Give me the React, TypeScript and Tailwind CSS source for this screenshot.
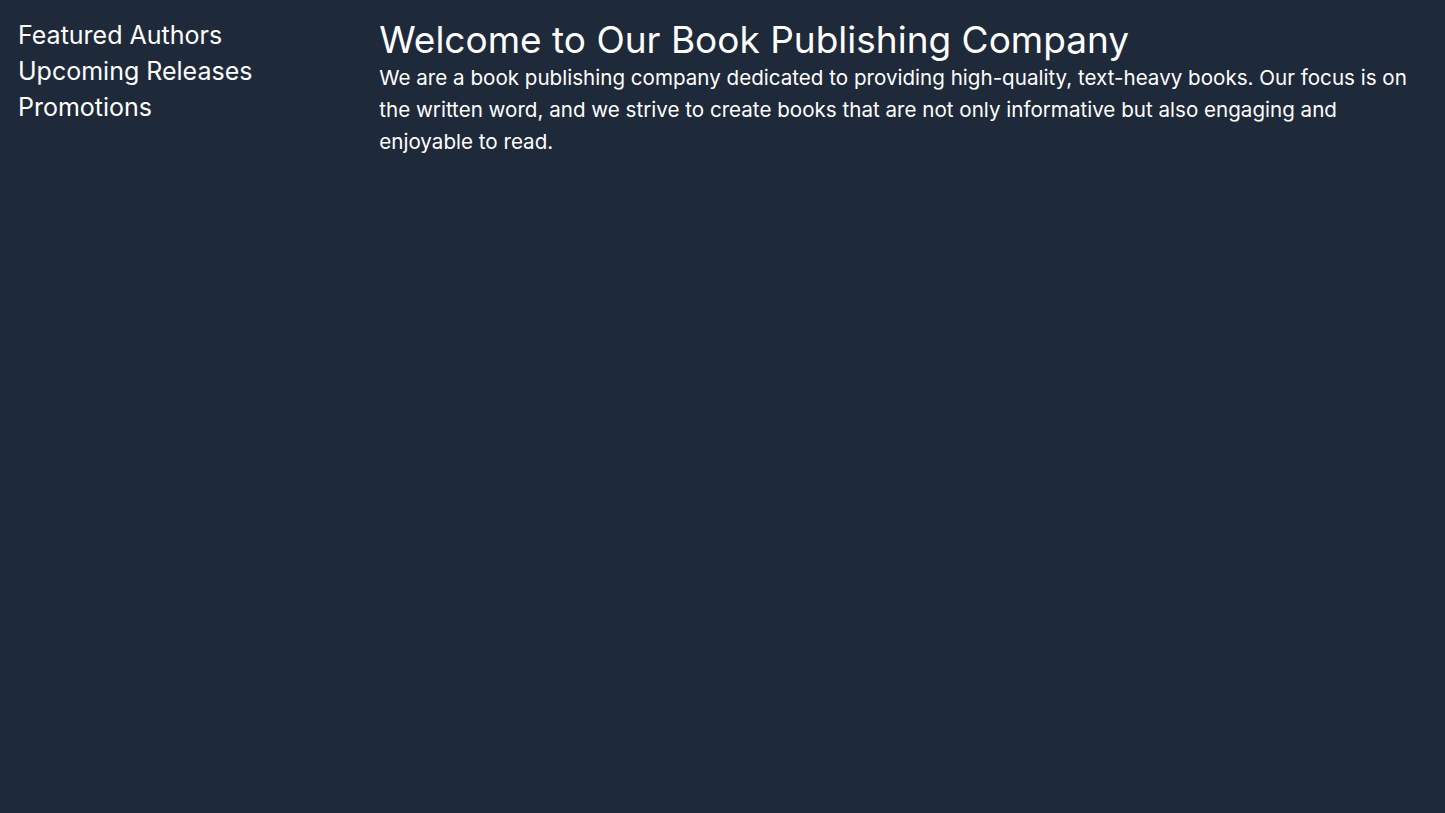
export default function App() {
  return (
    <div className="flex min-h-screen bg-gray-800 font-['Inter',sans-serif] text-white">
      <aside className="w-1/4 pt-[17px] pb-4 pl-[18px] pr-4">
        <nav className="flex flex-col">
          <a href="#" className="text-[25px] leading-9">Featured Authors</a>
          <a href="#" className="text-[25px] leading-9">Upcoming Releases</a>
          <a href="#" className="text-[25px] leading-9">Promotions</a>
        </nav>
      </aside>
      <main className="w-3/4 pt-[18px] pb-4 pl-[18px] pr-4">
        <h1 className="text-[37px] leading-[44px]">Welcome to Our Book Publishing Company</h1>
        <p className="text-[20.6px] leading-8">
          We are a book publishing company dedicated to providing high-quality, text-heavy books. Our focus is on
          the written word, and we strive to create books that are not only informative but also engaging and
          enjoyable to read.
        </p>
      </main>
    </div>
  )
}
